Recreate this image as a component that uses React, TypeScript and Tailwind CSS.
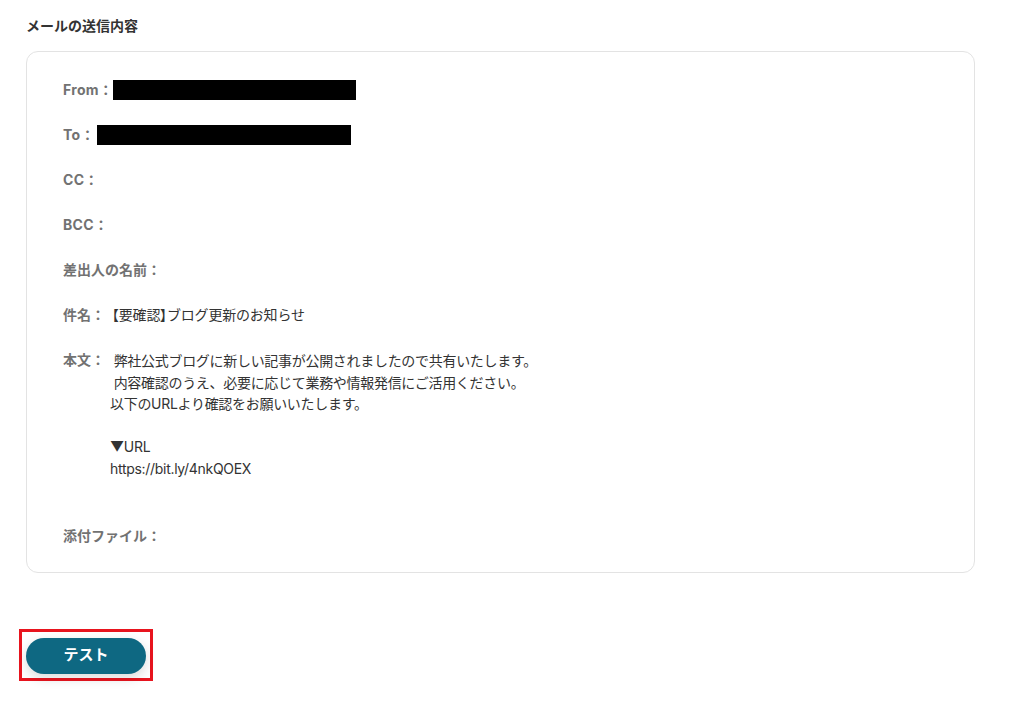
export default function App() {
  const bodyLines = [
    ' 弊社公式ブログに新しい記事が公開されましたので共有いたします。',
    ' 内容確認のうえ、必要に応じて業務や情報発信にご活用ください。',
    '以下のURLより確認をお願いいたします。',
    '',
    '▼URL',
    'https://bit.ly/4nkQOEX',
    '',
  ];

  return (
    <div className="min-h-screen bg-white px-[26px] pt-[16px] font-['Inter','Noto_Sans_CJK_JP',sans-serif] text-[#333]">
      {/* Section title */}
      <h2 className="text-[14px] font-bold leading-[20px]">メールの送信内容</h2>

      {/* Mail preview card */}
      <div className="mt-[15px] w-[949px] rounded-[12px] border border-[#e3e3e3] pl-9 pr-9 pt-7 pb-[26px]">
        <div className="flex flex-col gap-[25px]">
          <div className="flex h-5 items-center">
            <span className="text-[14px] font-bold leading-5 text-[#727272] tracking-[0.3px]">From：</span>
            <span className="h-5 w-[243px] bg-black" />
          </div>
          <div className="flex h-5 items-center">
            <span className="text-[14px] font-bold leading-5 text-[#727272] tracking-[0.3px]">To：</span>
            <span className="ml-[2px] h-5 w-[254px] bg-black" />
          </div>
          <div className="flex h-5 items-center">
            <span className="text-[14px] font-bold leading-5 text-[#727272] tracking-[0.3px]">CC：</span>
          </div>
          <div className="flex h-5 items-center">
            <span className="text-[14px] font-bold leading-5 text-[#727272] tracking-[0.3px]">BCC：</span>
          </div>
          <div className="flex h-5 items-center">
            <span className="text-[14px] font-bold leading-5 text-[#727272]">差出人の名前：</span>
          </div>
          <div className="flex h-5 items-center">
            <span className="text-[14px] font-bold leading-5 text-[#727272]">件名：</span>
            <span className="text-[14px] leading-5 tracking-[-0.2px]">
              【要確認<span className="[font-feature-settings:'palt']">】</span>ブログ更新のお知らせ
            </span>
          </div>
          <div className="flex items-start">
            <span className="text-[14px] font-bold leading-5 text-[#727272]">本文：</span>
            <div className="ml-[5px] text-[14px] leading-[21.5px] tracking-[-0.3px] whitespace-pre">
              {bodyLines.map((line, i) => (
                <div key={i} className="h-[21.5px]">
                  {line}
                </div>
              ))}
            </div>
          </div>
          <div className="flex h-5 items-center">
            <span className="text-[14px] font-bold leading-5 text-[#727272]">添付ファイル：</span>
          </div>
        </div>
      </div>

      {/* Test button, highlighted */}
      <div className="mt-[56px] ml-[-7px] inline-block border-[3px] border-[#e8141e] px-[4px] pt-[6px] pb-[4px]">
        <button className="flex h-9 w-[120px] items-center justify-center rounded-full bg-[#0e6882] text-[15px] font-bold text-white shadow-[0_4px_12px_rgba(0,0,0,0.15)]">
          テスト
        </button>
      </div>
    </div>
  );
}
